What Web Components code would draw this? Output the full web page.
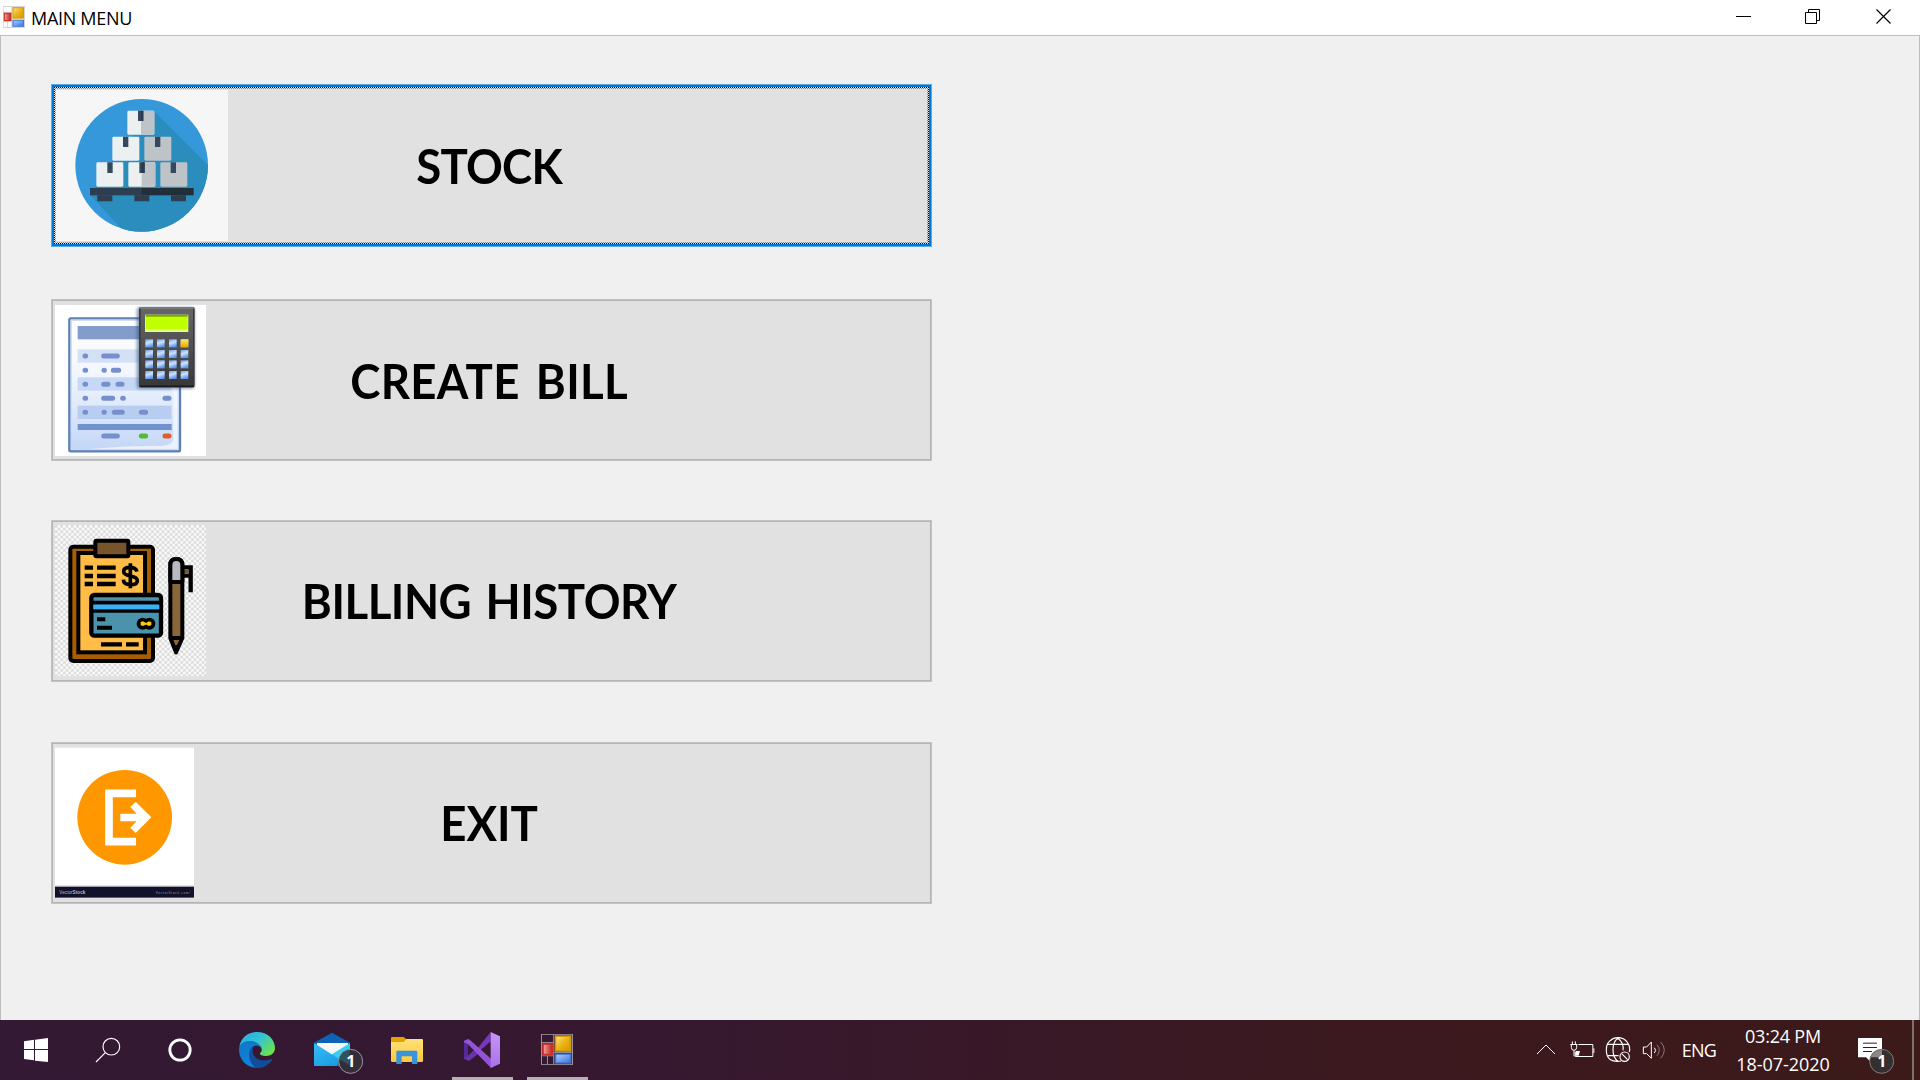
<!DOCTYPE html>
<html lang="en">
<head>
<meta charset="utf-8">
<title>MAIN MENU</title>
<style>
html,body{margin:0;height:100%;overflow:hidden}
body{font-family:"Open Sans","Noto Sans",sans-serif;color:#000}
</style>
</head>
<body>
<desktop-screen></desktop-screen>
<script>
function define(name, html, init) {
  const t = document.createElement('template');
  t.innerHTML = html;
  customElements.define(name, class extends HTMLElement {
    connectedCallback() {
      if (this.shadowRoot) return;
      this.attachShadow({mode: 'open'}).append(t.content.cloneNode(true));
      if (init) init(this, this.shadowRoot);
    }
  });
}

/* ---------- button pictures ---------- */
define('stock-picture', `
<style>:host{display:block}svg{display:block}</style>
<svg width="173" height="151" viewBox="45 45 519 453">
 <defs><clipPath id="c"><circle cx="305" cy="271" r="199"/></clipPath></defs>
 <rect x="45" y="45" width="519" height="453" fill="#f6f6f6"/>
 <circle cx="305" cy="271" r="199" fill="#3498db"/>
 <path clip-path="url(#c)" d="M342 108L520 286V480H262L150 360L262 200Z" fill="#2b8cbe"/>
 <g fill="#ecf0f1"><rect x="262" y="107" width="81" height="72" rx="4"/><rect x="217" y="185" width="81" height="72" rx="4"/><rect x="169" y="262" width="81" height="73" rx="4"/><rect x="265" y="262" width="81" height="73" rx="4"/></g>
 <g fill="#bdc3c7"><path d="M303 107h36q4 0 4 4v64q0 4-4 4h-36zM305 262h37q4 0 4 4v65q0 4-4 4h-37z"/><rect x="313" y="185" width="81" height="72" rx="4"/><rect x="361" y="262" width="81" height="73" rx="4"/></g>
 <g fill="#34495e"><path d="M294 107h16v31h-16zM249 185h16v31h-16zM345 185h16v31h-16zM202 262h16v32h-16zM298 262h16v32h-16zM392 262h16v32h-16z"/></g>
 <path d="M303 107h7v31h-7zM305 262h9v32h-9z" fill="#2a3b4d"/>
 <rect x="150" y="339" width="156" height="22" fill="#2c3e50"/><rect x="305" y="339" width="156" height="22" fill="#212f3a"/>
 <path d="M172 361h45v18h-45zM283 361h45v18h-45zM393 361h45v18h-45z" fill="#2c3e50"/>
</svg>`);

define('bill-picture', `
<style>:host{display:block}svg{display:block}</style>
<svg width="151" height="151" viewBox="45 45 453 453">
 <defs>
  <linearGradient id="p" x1="0" y1="0" x2="0" y2="1"><stop offset="0" stop-color="#fff"/><stop offset=".4" stop-color="#f3f7fe"/><stop offset="1" stop-color="#c3d6f7"/></linearGradient>
  <linearGradient id="b" x1="0" y1="0" x2="0" y2="1"><stop offset="0" stop-color="#666"/><stop offset="1" stop-color="#383838"/></linearGradient>
  <linearGradient id="k" x1="0" y1="0" x2=".3" y2="1"><stop offset="0" stop-color="#6f9ee2"/><stop offset=".5" stop-color="#cfe2ff"/><stop offset="1" stop-color="#5c97ee"/></linearGradient>
  <linearGradient id="y" x1="0" y1="0" x2="0" y2="1"><stop offset="0" stop-color="#ffe95e"/><stop offset="1" stop-color="#e8a600"/></linearGradient>
  <filter id="s" x="-20%" y="-20%" width="140%" height="140%"><feGaussianBlur stdDeviation="4"/></filter>
 </defs>
 <rect x="45" y="45" width="453" height="453" fill="#fff"/>
 <rect x="88" y="85" width="332" height="399" rx="4" fill="url(#p)" stroke="#5f80b4" stroke-width="7"/>
 <rect x="94" y="91" width="320" height="387" fill="none" stroke="#c9d9f5" stroke-width="3"/>
 <path d="M413 320V477H150Q270 466 360 468Q404 466 400 440V300H413Z" fill="#f4f8ff" opacity=".8"/>
 <rect x="113" y="108" width="195" height="40" fill="#829dcb"/>
 <rect x="113" y="178" width="281" height="40" fill="#d3e0f6"/><rect x="113" y="262" width="281" height="40" fill="#c6d8f5"/><rect x="113" y="347" width="281" height="40" fill="#b8cdf0"/>
 <rect x="113" y="402" width="282" height="18" fill="#7093cd"/>
 <g stroke="#7590cc" stroke-width="15" stroke-linecap="round"><path d="M135 198h2M135 241h2M135 283h2M135 325h2M135 367h2M191 198h41M192 241h1M220 241h16M191 283h13M234 283h12M191 325h27M248 325h2M375 325h12M192 367h1M223 367h24M304 367h13M191 438h41"/></g>
 <path d="M304 438h13" stroke="#52bd32" stroke-width="15" stroke-linecap="round"/><path d="M375 438h12" stroke="#e15c26" stroke-width="15" stroke-linecap="round"/>
 <rect x="290" y="52" width="174" height="244" rx="8" fill="#34507d" opacity=".55" filter="url(#s)"/>
 <rect x="297" y="51" width="167" height="241" rx="6" fill="#3a3a3a"/><rect x="302" y="56" width="157" height="230" rx="3" fill="url(#b)"/><path d="M300 54h161" stroke="#8b8b8b" stroke-width="5"/><path d="M299 289h163" stroke="#191919" stroke-width="5"/>
 <rect x="315" y="74" width="130" height="52" fill="#dfff8a"/><rect x="317" y="75" width="126" height="43" fill="#bfff00"/><rect x="317" y="75" width="126" height="5" fill="#78a600"/>
 <g fill="url(#k)">${[148,180,211,243].map(y=>[316,351,387,422].map(x=>`<rect x="${x}" y="${y}" width="23" height="24"/>`).join('')).join('')}</g>
 <rect x="422" y="148" width="23" height="24" fill="url(#y)"/>
</svg>`);

define('history-picture', `
<style>:host{display:block}svg{display:block}</style>
<svg width="151" height="151" viewBox="45 45 453 453">
 <defs><pattern id="q" x="45" y="45" width="16" height="16" patternUnits="userSpaceOnUse"><rect width="16" height="16" fill="#fafafa"/><path d="M0 0h8v8H0zM8 8h8v8H8z" fill="#dcdcdc"/></pattern></defs>
 <rect x="45" y="45" width="453" height="453" fill="url(#q)"/>
 <g stroke="#000" stroke-width="12" stroke-linejoin="round">
  <rect x="91" y="110" width="248" height="343" rx="9" fill="#a85d00"/>
  <rect x="115" y="129" width="200" height="298" fill="#ffbc46" stroke-linejoin="miter"/>
  <rect x="166" y="92" width="99" height="47" rx="3" fill="#76552c"/>
 </g>
 <path d="M134 173h25M171 173h56M134 198h25M171 198h56M134 222h25M171 222h56M183 403h63M258 403h38" stroke="#000" stroke-width="13"/>
 <path d="M291 185C288 173 278 172 270 172C259 172 251 176 251 184C251 193 260 196 271 198C283 200 292 204 292 212C292 220 283 224 271 224C259 224 251 221 250 209M271 160V235" fill="none" stroke="#000" stroke-width="11"/>
 <rect x="154" y="255" width="209" height="122" rx="9" fill="#4b92ad" stroke="#000" stroke-width="13"/>
 <path d="M154 278h209M154 303h209" stroke="#000" stroke-width="11"/><path d="M160 291h198" stroke="#38b0f5" stroke-width="13"/>
 <path d="M171 328h25M171 353h45" stroke="#000" stroke-width="12"/>
 <circle cx="308" cy="341" r="18"/><circle cx="328" cy="341" r="18"/><path d="M302 336l7-2 8 4 3 0 6-4 8 2v10l-8 2-6-4h-3l-8 4-7-2z" fill="#ffc800"/>
 <path d="M432 172h20v75M432 197h20" fill="none" stroke="#000" stroke-width="13"/><path d="M432 179h14v11h-14z" fill="#76552c"/>
 <g stroke="#000" stroke-width="12" stroke-linejoin="round"><path d="M391 384V165Q391 147 409 147Q427 147 427 165V384L408 427Z" fill="#896638"/><path d="M391 216V165Q391 147 409 147Q427 147 427 165V216Z" fill="#b9b7c0"/><path d="M391 384h36"/></g>
 <path d="M399 405h18l-9 26z"/>
</svg>`);

define('exit-picture', `
<style>:host{display:block}svg{display:block}text{font-family:"Liberation Sans",sans-serif}</style>
<svg width="139" height="151" viewBox="45 45 417 453">
 <rect x="45" y="47" width="417" height="451" fill="#fff"/>
 <circle cx="254" cy="256" r="142" fill="#ff9800"/>
 <path d="M288 184H207V329H288" fill="none" stroke="#fff" stroke-width="23"/>
 <path d="M241 245H290L271 225L287 209L334 256L287 303L271 287L290 268H241Z" fill="#fff"/>
 <rect x="45" y="459" width="417" height="5" fill="#e2e2e5"/><rect x="45" y="464" width="417" height="33" fill="#11112a"/>
 <text x="58" y="487" font-size="14" fill="#b9b9c3" textLength="78">Vector<tspan font-weight="700">Stock</tspan></text>
 <text x="347" y="486" font-size="9" fill="#a0a0ac" textLength="103">VectorStock.com/</text>
</svg>`);

/* ---------- window ---------- */
define('app-icon', `
<style>:host{display:block}svg{display:block;width:100%;height:100%}</style>
<svg viewBox="0 0 96 94">
 <defs><linearGradient id="r"><stop stop-color="#f29a92"/><stop offset="1" stop-color="#c62b25"/></linearGradient>
 <linearGradient id="y" x1="0" y1="0" x2="1" y2="1"><stop stop-color="#fbe08a"/><stop offset=".5" stop-color="#ecb416"/><stop offset="1" stop-color="#d99a00"/></linearGradient>
 <linearGradient id="b" x1="0" y1="0" x2="1" y2="1"><stop stop-color="#a9c9ff"/><stop offset="1" stop-color="#3d77e0"/></linearGradient></defs>
 <rect x="1" y="1" width="94" height="92" style="fill:var(--cell,none);stroke:var(--line,#9b939c)" stroke-width="3"/>
 <path d="M38 1V93M1 26H38M1 66H38M19 66V93M38 56H95" style="stroke:var(--line,#9b939c)" stroke-width="3"/>
 <rect x="3" y="28" width="34" height="37" fill="#c8302a"/><rect x="8" y="33" width="24" height="27" fill="url(#r)"/>
 <rect x="41" y="4" width="51" height="50" fill="#d59b06"/><rect x="46" y="9" width="40" height="40" fill="url(#y)"/>
 <rect x="41" y="59" width="51" height="31" fill="#3f76d5"/><rect x="46" y="63" width="41" height="23" fill="url(#b)"/>
</svg>`);

define('title-bar', `
<style>
:host{display:flex;box-sizing:border-box;height:36px;background:#fff;border-bottom:1px solid #bdbdbd;align-items:center}
app-icon{width:22px;height:22px;margin:-2px 0 0 3px;--cell:#fff;--line:#c4c4c4}
.t{margin-left:6px;font-size:18px;line-height:35px;letter-spacing:-.3px;flex:1;white-space:nowrap;padding-top:2px}
svg{display:block}
</style>
<app-icon></app-icon><span class="t"><slot></slot></span>
<svg width="220" height="35" viewBox="0 0 220 35" fill="none" stroke="#000" stroke-width="1"><path d="M36 16.5h15M105.500 12.500h11v11h-11zM108.500 12.500v-3h11v11h-3"/><path d="M176.500 9.500l14 14M190.500 9.500l-14 14" stroke-width="1.2"/></svg>`);

define('menu-button', `
<style>
:host{display:grid;box-sizing:border-box;width:881px;height:162px;background:#e1e1e1;border:1px solid #c2c2c2;box-shadow:inset 0 0 0 1px #b5b5b5;padding:var(--top,5px) 3px 5px;align-items:start}
:host([focused]){height:163px;border-color:#5ca8e5;box-shadow:inset 0 0 0 2px #0078d7;position:relative}
:host([focused])::after{content:"";position:absolute;inset:2px;border:1px dotted #000}
:host([focused])::before{content:"";position:absolute;inset:3px;border:1px dotted rgba(0,0,0,.4)}
.pic,.label{grid-area:1/1}
.label{align-self:center;text-align:center;font:700 48px/58px Lato,"Open Sans",sans-serif;letter-spacing:var(--track,0);word-spacing:var(--gap,0);white-space:nowrap;padding-right:5px;transform:scaleX(.95);color:#000}
</style>
<div class="pic"><slot name="picture"></slot></div><div class="label"><slot></slot></div>`);

define('main-window', `
<style>
:host{display:flex;flex-direction:column;height:1020px;background:#f0f0f0}
main{flex:1;display:flex;flex-direction:column;border:solid #bdbdbd;border-width:0 1px;padding:48px 0 0 50px}
.b{margin-bottom:52px;--track:-.8px}
.c{margin-bottom:59px;--track:.3px;--gap:5px}
.d{margin-bottom:60px;--track:-.5px;--gap:4px;--top:4px}
.e{--top:4px}
</style>
<title-bar>MAIN MENU</title-bar>
<main>
 <menu-button class="b" focused><stock-picture slot="picture"></stock-picture>STOCK</menu-button>
 <menu-button class="c"><bill-picture slot="picture"></bill-picture>CREATE BILL</menu-button>
 <menu-button class="d"><history-picture slot="picture"></history-picture>BILLING HISTORY</menu-button>
 <menu-button class="e"><exit-picture slot="picture"></exit-picture>EXIT</menu-button>
</main>`);

/* ---------- taskbar ---------- */
define('task-item', `
<style>
:host{display:grid;width:75px;height:60px;flex:none}
::slotted(*){display:block;grid-area:1/1}
i{grid-area:1/1;display:none;align-self:end;margin-left:8px;width:61px;height:3px;background:#b7afb3}
:host([running]) i{display:block}
</style><slot></slot><i></i>`);

define('task-tray', `
<style>
:host{display:flex;height:60px;color:#fff;font-size:18px;white-space:nowrap}
svg{display:block;flex:none}
.lang{width:44px;line-height:60px;letter-spacing:-.7px;text-align:center}
.clock{width:120px;margin:0 6px 0 2px;display:flex;flex-direction:column;padding-top:2px;text-align:center;line-height:28px;letter-spacing:-.2px}
.date{letter-spacing:-.05px}
.end{width:2px;background:#81706f;margin-left:13px}
</style>
<svg width="144" height="60" viewBox="69 30 432 180" fill="none" stroke="#fff" stroke-width="3">
 <path d="M81 132L108 105L135 132"/>
 <path d="M205 103.500H248.500V139.500H196V126M251.500 115v14M187 94v9M196 94v9M181 103.500h21M184 104v8q0 9 8 9q8 0 8-9v-8M192 121v18"/><path d="M197 137h9l4-14h-13z" fill="#fff" stroke="none"/>
 <g stroke-width="3.500"><path d="M334 153Q289 160 289 120A35 35 0 1 1 358 126M294 103H354M294 137H326M324 85C304 98 304 141 324 154M324 85C338 96 341 109 339 121"/><circle cx="344" cy="140" r="14"/><path d="M335 131L353 149"/></g>
 <path d="M400 111h10L424 96V145L410 131H400Z"/><path d="M433 113q8 8 0 16"/><path d="M441 104q14 16 0 33M452 96q22 24 0 49" stroke="#8e7878"/>
</svg>
<span class="lang">ENG</span>
<div class="clock"><span>03:24 PM</span><span class="date">18-07-2020</span></div>
<svg width="50" height="60" viewBox="1017 30 150 180">
 <path d="M1044 84H1116V142H1083V157L1068 142H1044Z" fill="#fff"/><path d="M1059 99.500H1101M1059 112.500H1101M1059 124.500H1086" stroke="#3b1a1c" stroke-width="3"/>
 <circle cx="1115" cy="154" r="36" fill="#332f31" stroke="#85797a" stroke-width="3"/><path d="M1082 142A35 35 0 0 1 1116 119V142H1082" fill="#8d8788"/><text x="1102" y="172" fill="#fff" font-family="Open Sans" font-size="48" font-weight="700">1</text>
</svg>
<span class="end"></span><svg width="6" height="60"></svg>`);

define('task-bar', `
<style>
:host{display:flex;justify-content:space-between;height:60px;background:linear-gradient(90deg,#331933,#361830 35%,#3b191f 70%,#3b1a19)}
nav{display:flex}.n{width:72px}.e{margin-left:3px}
svg{width:75px;height:60px}.n svg{width:72px}
.app{width:32px;height:31px;margin:14px 0 0 22px}
</style>
<nav>
<task-item class="n"><svg viewBox="0 30 216 180"><path d="M72 94L102 89V117H72ZM105 89L144 84V117H105ZM72 120H102V151L72 147ZM105 120H144V156L105 152Z" fill="#fff"/></svg></task-item>
<task-item class="n"><svg viewBox="216 30 216 180"><g fill="none" stroke="#fff" stroke-width="3.500"><circle cx="334" cy="110" r="25"/><path d="M316 128L288 156"/></g></svg></task-item>
<task-item class="n"><svg viewBox="432 30 216 180"><circle cx="540" cy="120" r="30.500" fill="none" stroke="#fff" stroke-width="8.500"/></svg></task-item>
<task-item class="e"><svg viewBox="657 30 225 180">
 <defs><linearGradient id="g1" x1="0" y1="0" x2="1" y2=".7"><stop stop-color="#2ca8e0"/><stop offset=".5" stop-color="#2fc3d8"/><stop offset="1" stop-color="#6de24a"/></linearGradient><linearGradient id="g2" x1="0" y1="0" x2=".4" y2="1"><stop stop-color="#1176c4"/><stop offset="1" stop-color="#0f83dd"/></linearGradient></defs>
 <path d="M718 111C722 83 744 66 771 66C803 66 825 89 825 114C825 129 813 138 797 138C785 138 778 134 780 130C785 125 787 119 783 111C772 91 735 87 718 111Z" fill="url(#g1)"/>
 <path d="M717 120C717 101 732 93 748 93C768 93 783 104 785 117C781 108 769 104 761 109C748 120 752 156 780 173C744 178 717 151 717 120Z" fill="url(#g2)"/>
 <path d="M761 108C740 120 744 158 768 174C788 176 807 165 816 150C817 147 815 146 812 148C785 158 758 146 758 123Q758 114 761 108Z" fill="#104e9b"/></svg></task-item>
<task-item><svg viewBox="-18 30 225 180">
 <defs><linearGradient id="m" x1="0" y1="0" x2="1" y2="1"><stop stop-color="#36bdf5"/><stop offset="1" stop-color="#1492df"/></linearGradient></defs>
 <path d="M42 98L96 68L150 98V140H42Z" fill="#0d62b5"/><path d="M51 99H144V120L97 150L51 120Z" fill="#f6f6f6"/><path d="M150 99V168H75L97 132Z" fill="#39cdf4"/><path d="M42 99L150 168H42Z" fill="url(#m)"/>
 <path d="M118 147L150 168H110Z" fill="#127bb9"/><circle cx="152" cy="154" r="36" fill="#342d39" stroke="#9a929c" stroke-width="3"/><path d="M117 147A36 36 0 0 1 149 119V166Z" fill="#2a6470" opacity=".7"/><text x="139" y="172" fill="#fff" font-family="Open Sans" font-size="48" font-weight="700">1</text></svg></task-item>
<task-item><svg viewBox="207 30 225 180">
 <defs><linearGradient id="f" x1="0" y1="0" x2="0" y2="1"><stop stop-color="#ffe17b"/><stop offset="1" stop-color="#ffc83c"/></linearGradient></defs>
 <path d="M273 84q0-3 3-3h35l7 6v14H273z" fill="#e5a100"/><path d="M273 96h38l8-9h47q3 0 3 3v62q0 4-4 4h-88q-4 0-4-4z" fill="url(#f)"/><path d="M289 126q0-4 4-4h55q4 0 4 4v36h-16v-23h-31v23h-16z" fill="#3794dd"/></svg></task-item>
<task-item running><svg viewBox="432 30 225 180">
 <defs><linearGradient id="v" x1="0" y1="0" x2="0" y2="1"><stop stop-color="#c597f6"/><stop offset="1" stop-color="#aa70ec"/></linearGradient></defs>
 <path d="M492 93L504 88V151L492 146Z" fill="#55279b"/><path d="M504 151L572 66V94L509 149Q506 152 504 151Z" fill="#7937bd"/><path d="M492 146L504 137L522 120L534 132L510 151Q506 153 502 151Z" fill="#6831ae"/><path d="M492 93L502 88Q507 87 510 90L573 146V174L504 103L492 97Z" fill="#9353d7"/><path d="M572 66L600 79V161L572 174Z" fill="url(#v)"/></svg></task-item>
<task-item running><app-icon class="app"></app-icon></task-item>
</nav>
<task-tray></task-tray>`);

define('desktop-screen', `
<style>:host{display:flex;flex-direction:column;width:1920px;height:1080px;overflow:hidden}</style>
<main-window></main-window><task-bar></task-bar>`);
</script>
</body>
</html>
